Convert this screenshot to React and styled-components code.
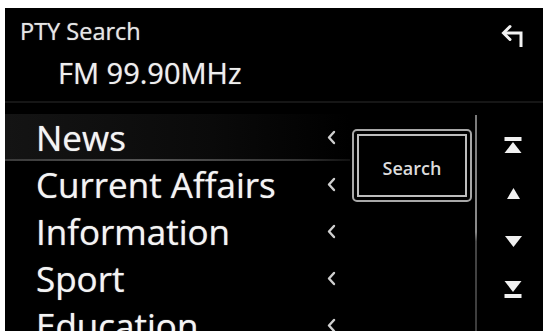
import React from "react";
import styled, { createGlobalStyle } from "styled-components";

const GlobalStyle = createGlobalStyle`
*{
    box-sizing: border-box;
    margin: 0;
    padding: 0;
}
body{
    background: #ffffff;
    font-family: "Open Sans", "Noto Sans", sans-serif;
    overflow: hidden;
}`

const Screen = styled.div`
margin: 8px 0 0 5px;
height: 323px;
background: #000;
color: #f2f2f2;
display: flex;
flex-direction: column;
overflow: hidden;
`
const Header = styled.header`
height: 95px;
padding: 9px 18px 0 15px;
border-bottom: 2px solid #161616;
flex-shrink: 0;
`
const TitleRow = styled.div`
display: flex;
justify-content: space-between;
align-items: flex-start;
`
const Title = styled.h1`
font-size: 23.5px;
line-height: 28px;
font-weight: 400;
color: #e6e6e6;
text-shadow: 0 0 1px rgba(255,255,255,0.6);
`
const BackIcon = styled.svg`
width: 25px;
height: 24px;
margin-top: 7px;
`
const Frequency = styled.div`
font-size: 29px;
line-height: 34px;
margin: 8px 0 0 38px;
color: #efefef;
text-shadow: 0 0 1px rgba(255,255,255,0.6);
`
const Body = styled.div`
flex: 1;
display: flex;
padding-top: 11px;
`
const List = styled.ul`
list-style: none;
width: 345px;
flex-shrink: 0;
`
const Row = styled.li`
position: relative;
height: 47px;
display: flex;
align-items: center;
justify-content: space-between;
padding: 0 13px 0 31px;
font-size: 35px;
line-height: 47px;
color: #f4f4f4;
white-space: nowrap;
text-shadow: 0 0 1px rgba(255,255,255,0.7);
${p => p.$active && `
background: linear-gradient(90deg, #141414 0%, #0a0a0a 60%, #000 100%);
&::after{
    content: "";
    position: absolute;
    left: 0;
    right: 0;
    bottom: 0;
    height: 2px;
    background: linear-gradient(90deg, #3a3a3a 0%, #555 40%, #333 85%, #111 100%);
}`}
`
const Chevron = styled.svg`
width: 11px;
height: 15px;
flex-shrink: 0;
`
const ButtonCol = styled.div`
padding: 15px 0 0 2px;
width: 125px;
flex-shrink: 0;
`
const SearchButton = styled.button`
width: 120px;
height: 73px;
background: #000;
border: 2px solid #a8a8a8;
border-radius: 5px;
padding: 3px;
cursor: pointer;
`
const SearchInner = styled.span`
display: flex;
align-items: center;
justify-content: center;
width: 100%;
height: 100%;
border: 2px solid #bdbdbd;
padding-top: 4px;
font-family: "Open Sans", "Noto Sans", sans-serif;
font-size: 18px;
font-weight: 600;
color: #dcdcdc;
`
const ScrollTrack = styled.div`
width: 2px;
flex-shrink: 0;
margin-top: 1px;
background: linear-gradient(180deg, #7a7a7a 0%, #8a8a8a 50%, #444 54%, #3a3a3a 100%);
`
const IconCol = styled.div`
flex: 1;
display: flex;
flex-direction: column;
align-items: center;
padding: 7px 0 0 6px;
`
const IconCell = styled.div`
height: 48px;
display: flex;
align-items: center;
justify-content: center;
`

const rows = ["News", "Current Affairs", "Information", "Sport", "Education"]

const ChevronIcon = () => (
    <Chevron viewBox="0 0 11 15">
        <polyline points="8,2 3,7.5 8,13" fill="none" stroke="#cfcfcf" strokeWidth="2.4" strokeLinejoin="round" strokeLinecap="round"/>
    </Chevron>
)

export default function App(){
    return(
        <>
        <GlobalStyle/>
        <Screen>
            <Header>
                <TitleRow>
                    <Title>PTY Search</Title>
                    <BackIcon viewBox="0 0 25 24">
                        <path d="M21 23 V9 H4" fill="none" stroke="#f2f2f2" strokeWidth="3" strokeLinejoin="miter"/>
                        <polyline points="10,2.5 3.5,9 10,15.5" fill="none" stroke="#f2f2f2" strokeWidth="3" strokeLinecap="round"/>
                    </BackIcon>
                </TitleRow>
                <Frequency>FM 99.90MHz</Frequency>
            </Header>
            <Body>
                <List>
                    {rows.map((r, i) => (
                        <Row key={r} $active={i === 0}>
                            <span>{r}</span>
                            <ChevronIcon/>
                        </Row>
                    ))}
                </List>
                <ButtonCol>
                    <SearchButton>
                        <SearchInner>Search</SearchInner>
                    </SearchButton>
                </ButtonCol>
                <ScrollTrack/>
                <IconCol>
                    <IconCell>
                        <svg width="18" height="17" viewBox="0 0 18 17">
                            <rect x="0.5" y="0" width="17" height="4" fill="#f0f0f0"/>
                            <polygon points="9,5 17.5,16 0.5,16" fill="#f0f0f0"/>
                        </svg>
                    </IconCell>
                    <IconCell>
                        <svg width="13" height="11" viewBox="0 0 13 11">
                            <polygon points="6.5,0 13,11 0,11" fill="#f0f0f0"/>
                        </svg>
                    </IconCell>
                    <IconCell>
                        <svg width="17" height="11" viewBox="0 0 17 11">
                            <polygon points="0,0 17,0 8.5,11" fill="#f0f0f0"/>
                        </svg>
                    </IconCell>
                    <IconCell>
                        <svg width="18" height="17" viewBox="0 0 18 17">
                            <polygon points="0.5,0 17.5,0 9,11" fill="#f0f0f0"/>
                            <rect x="0.5" y="13" width="17" height="4" fill="#f0f0f0"/>
                        </svg>
                    </IconCell>
                </IconCol>
            </Body>
        </Screen>
        </>
    )
}
